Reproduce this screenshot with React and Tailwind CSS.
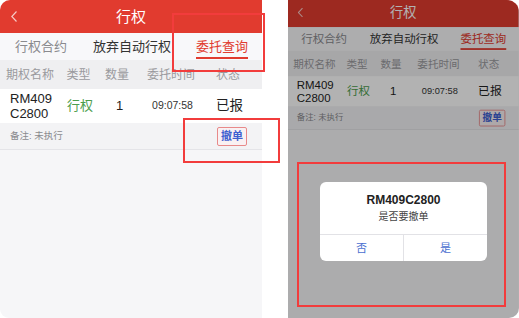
const FONT = "font-['Liberation_Sans','Noto_Sans_CJK_SC',sans-serif]"

function Phone() {
  return (
    <div className="w-[262px] h-[370px] flex flex-col bg-[#f6f6f8]">
      {/* nav bar */}
      <div className="h-[33px] bg-[#e13b2f] flex items-center relative shrink-0">
        <svg className="ml-[11px]" width="6" height="11" viewBox="0 0 6 11">
          <polyline points="5.5,0.5 0.8,5.5 5.5,10.5" fill="none" stroke="#f6c9c4" strokeWidth="1.2" />
        </svg>
        <div className="flex-1 text-center text-white text-[15px] pr-[17px] leading-none">行权</div>
      </div>

      {/* tabs */}
      <div className="h-[27px] bg-[#f8f8fa] flex items-center text-[13px] shrink-0">
        <div className="w-[80px] pl-[15px] text-[#8a8a8e]">行权合约</div>
        <div className="w-[106px] pl-[13px] text-[#333]">放弃自动行权</div>
        <div className="relative h-full flex items-center pl-[10px] text-[#e13b2f]">
          委托查询
          <div className="absolute left-[10px] right-0 bottom-[1px] h-[2px] bg-[#e13b2f]" />
        </div>
      </div>

      {/* table head */}
      <div className="h-[29px] bg-[#efeff1] grid grid-cols-[60px_37px_40px_68px_46px] items-center text-[12px] text-[#9a9a9e] text-center shrink-0">
        <div>期权名称</div>
        <div>类型</div>
        <div>数量</div>
        <div>委托时间</div>
        <div>状态</div>
      </div>

      {/* data row */}
      <div className="h-[34px] bg-white grid grid-cols-[60px_37px_40px_68px_46px] items-center text-center shrink-0">
        <div className="text-left pl-[10px] text-[13px] leading-[15px] text-[#222]">
          RM409
          <br />
          C2800
        </div>
        <div className="text-[13px] text-[#4c9d4c] pl-[3px]">行权</div>
        <div className="text-[13px] text-[#222] pl-[5px]">1</div>
        <div className="text-[10.5px] text-[#333] pl-[3px]">09:07:58</div>
        <div className="text-[13.5px] text-[#222] pl-[3px]">已报</div>
      </div>

      {/* note row */}
      <div className="h-[27px] bg-[#f3f3f5] border-b border-[#e4e4e8] flex items-center justify-between shrink-0">
        <div className="pl-[10px] text-[9.5px] text-[#8a8a8e]">备注: 未执行</div>
        <div className="mr-[15px] w-[30px] h-[19px] border border-[#e88a8a] rounded-[2px] bg-[#f9f1f3] flex items-center justify-center text-[11px] font-bold text-[#3f5fd0]">
          撤单
        </div>
      </div>

      <div className="flex-1" />
    </div>
  )
}

export default function App() {
  return (
    <div className={`relative w-[519px] h-[318px] bg-white flex ${FONT}`}>
      {/* left screenshot */}
      <div className="w-[262px] h-[318px] overflow-hidden rounded-tl-[10px] rounded-bl-[9px]">
        <Phone />
      </div>

      {/* right screenshot */}
      <div className="relative ml-[26px] w-[231px] h-[318px] overflow-hidden rounded-tr-[12px] rounded-br-[10px]">
        <div className="w-[262px] origin-top-left scale-[0.88] -mt-[2px]">
          <Phone />
        </div>
        <div className="absolute inset-0 bg-black/30 flex flex-col items-center pt-[182px]">
          <div className="w-[167px] h-[79px] bg-white rounded-[6px] flex flex-col">
            <div className="h-[52px] flex flex-col items-center justify-center">
              <div className="text-[12px] font-bold text-[#222] leading-[15px]">RM409C2800</div>
              <div className="text-[10px] text-[#444] leading-[14px] mt-[2px]">是否要撤单</div>
            </div>
            <div className="flex-1 border-t border-[#e2e2e6] flex">
              <div className="flex-1 flex items-center justify-center text-[11px] text-[#4a6fd0] border-r border-[#e2e2e6]">否</div>
              <div className="flex-1 flex items-center justify-center text-[11px] text-[#4a6fd0]">是</div>
            </div>
          </div>
        </div>
      </div>

      {/* annotation boxes */}
      <div className="absolute left-[172px] top-[13px] w-[93px] h-[59px] border-2 border-[#f23c3c]" />
      <div className="absolute left-[183px] top-[118px] w-[97px] h-[45px] border-2 border-[#f23c3c]" />
      <div className="absolute left-[297px] top-[162px] w-[209px] h-[145px] border-2 border-[#f23c3c]" />
    </div>
  )
}
